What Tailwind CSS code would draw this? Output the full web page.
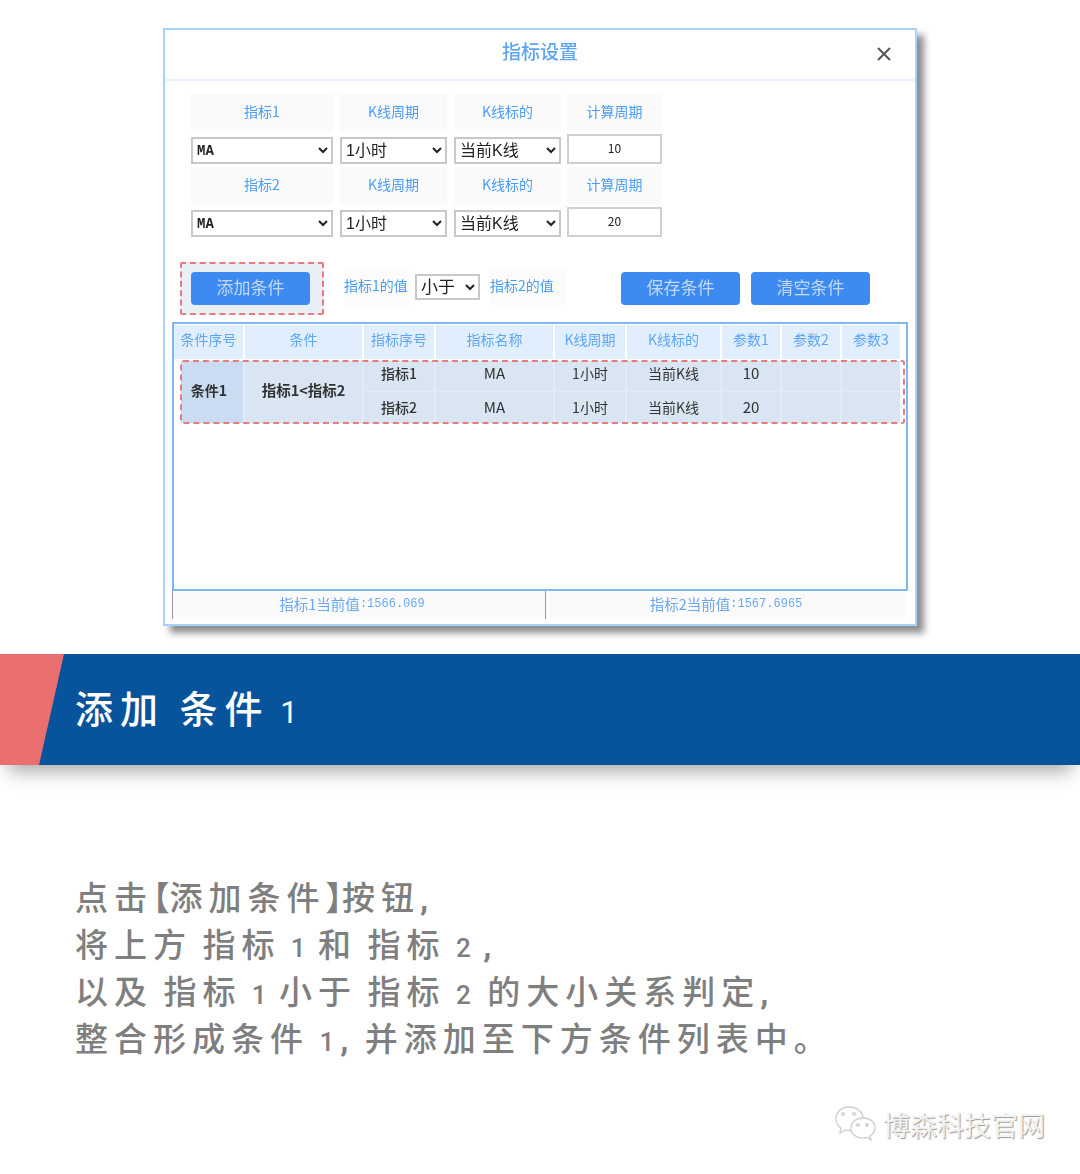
<!DOCTYPE html>
<html lang="zh-CN">
<head>
  <meta charset="UTF-8" />
  <meta name="viewport" content="width=device-width, initial-scale=1.0" />
  <title>添加条件 1</title>
  <script src="https://cdn.jsdelivr.net/npm/@tailwindcss/browser@4"></script>
</head>
<body class="bg-white h-[1174px] overflow-hidden font-['Noto_Sans_CJK_SC',sans-serif]">

  <!-- dialog -->
  <div class="ml-[163px] mt-[28px] w-[754px] h-[598px] bg-white border-2 border-[#a8d2fa] shadow-[7px_7px_7px_rgba(0,0,0,0.45)] pt-px blur-[0.4px]">
    <div class="relative h-[50px] border-b-2 border-[#e8f1fc] flex items-center justify-center pb-[8px] text-[19px] font-medium text-[#5ea6f4]">
      指标设置
      <svg class="absolute left-[712px] top-[16px] w-[14px] h-[14px]" viewBox="0 0 14 14" fill="none" stroke="#555" stroke-width="2"><path d="M1 1L13 13M13 1L1 13" /></svg>
    </div>

    <div class="ml-[26px] mt-[13px] grid grid-cols-[142px_107px_107px_95px] gap-x-[7px] text-[14px] text-[#4a9df5]">
      <div class="h-[37px] bg-[#fafafa] flex items-center justify-center pb-[2px]">指标1</div>
      <div class="h-[37px] bg-[#fafafa] flex items-center justify-center pb-[2px]">K线周期</div>
      <div class="h-[37px] bg-[#fafafa] flex items-center justify-center pb-[2px]">K线标的</div>
      <div class="-ml-px w-[95px] h-[37px] bg-[#fafafa] flex items-center justify-center pb-[2px]">计算周期</div>

      <select class="mt-[6px] h-[27px] border-2 border-[#c8c8c8] bg-white text-[#222] text-[14px] font-bold font-['Liberation_Mono',monospace]"><option>MA</option></select>
      <select class="mt-[6px] h-[27px] border-2 border-[#c8c8c8] bg-white text-[#222] text-[16px] font-['Liberation_Sans','Noto_Sans_CJK_SC',sans-serif]"><option>1小时</option></select>
      <select class="mt-[6px] h-[27px] border-2 border-[#c8c8c8] bg-white text-[#222] text-[16px] font-['Liberation_Sans','Noto_Sans_CJK_SC',sans-serif]"><option>当前K线</option></select>
      <div class="-ml-px w-[95px] mt-[3px] h-[30px] border-2 border-[#d0d0d0] bg-white text-[#222] text-[12px] flex items-center justify-center pb-[2px]">10</div>

      <div class="mt-[3px] h-[37px] bg-[#fafafa] flex items-center justify-center pb-[2px]">指标2</div>
      <div class="mt-[3px] h-[37px] bg-[#fafafa] flex items-center justify-center pb-[2px]">K线周期</div>
      <div class="mt-[3px] h-[37px] bg-[#fafafa] flex items-center justify-center pb-[2px]">K线标的</div>
      <div class="-ml-px w-[95px] mt-[3px] h-[37px] bg-[#fafafa] flex items-center justify-center pb-[2px]">计算周期</div>

      <select class="mt-[6px] h-[27px] border-2 border-[#c8c8c8] bg-white text-[#222] text-[14px] font-bold font-['Liberation_Mono',monospace]"><option>MA</option></select>
      <select class="mt-[6px] h-[27px] border-2 border-[#c8c8c8] bg-white text-[#222] text-[16px] font-['Liberation_Sans','Noto_Sans_CJK_SC',sans-serif]"><option>1小时</option></select>
      <select class="mt-[6px] h-[27px] border-2 border-[#c8c8c8] bg-white text-[#222] text-[16px] font-['Liberation_Sans','Noto_Sans_CJK_SC',sans-serif]"><option>当前K线</option></select>
      <div class="-ml-px w-[95px] mt-[3px] h-[30px] border-2 border-[#d0d0d0] bg-white text-[#222] text-[12px] flex items-center justify-center pb-[2px]">20</div>
    </div>

    <!-- add condition row -->
    <div class="ml-[15px] mt-[25px] h-[53px] flex items-start text-[14px] text-[#4a9df5]">
      <div class="w-[144px] h-[53px] bg-[#e8eff7] border-2 border-dashed border-[#ea7a7d] rounded-[2px] pl-[9px] pt-[8px] shrink-0">
        <button class="block w-[119px] h-[33px] rounded-[4px] bg-[#3d8bf0] text-[#c2d9f7] text-[17px] pb-[4px]">添加条件</button>
      </div>
      <div class="ml-[20px] mt-[6px] w-[65px] h-[37px] bg-[#fbfbfb] flex items-center pb-[2px] whitespace-nowrap shrink-0">指标1的值</div>
      <select class="ml-[6px] mt-[12px] w-[65px] h-[26px] border-2 border-[#c8c8c8] bg-white text-[#222] text-[17px] font-['Liberation_Sans','Noto_Sans_CJK_SC',sans-serif] shrink-0"><option>小于</option></select>
      <div class="ml-[10px] mt-[6px] w-[76px] h-[37px] bg-[#fbfbfb] flex items-center pb-[2px] whitespace-nowrap shrink-0">指标2的值</div>
      <button class="ml-[55px] mt-[10px] w-[119px] h-[33px] rounded-[4px] bg-[#3d8bf0] text-[#c2d9f7] text-[17px] pb-[4px] shrink-0">保存条件</button>
      <button class="ml-[11px] mt-[10px] w-[119px] h-[33px] rounded-[4px] bg-[#3d8bf0] text-[#c2d9f7] text-[17px] pb-[4px] shrink-0">清空条件</button>
    </div>

    <!-- condition table -->
    <div class="relative ml-[7px] mt-[7px] w-[736px] h-[269px] border-2 border-[#7fb7ee] pt-px">
      <div class="grid grid-cols-[69px_117px_70px_117px_70px_93px_58px_58px_58px] h-[34px] gap-x-[2px] text-[14px] text-[#5ea6f4]">
        <div class="bg-[#e1eefe] flex items-center justify-center pb-[6px]">条件序号</div>
        <div class="bg-[#e1eefe] flex items-center justify-center pb-[6px]">条件</div>
        <div class="bg-[#e1eefe] flex items-center justify-center pb-[6px]">指标序号</div>
        <div class="bg-[#e1eefe] flex items-center justify-center pb-[6px]">指标名称</div>
        <div class="bg-[#e1eefe] flex items-center justify-center pb-[6px]">K线周期</div>
        <div class="bg-[#e1eefe] flex items-center justify-center pb-[6px]">K线标的</div>
        <div class="bg-[#e1eefe] flex items-center justify-center pb-[6px]">参数1</div>
        <div class="bg-[#e1eefe] flex items-center justify-center pb-[6px]">参数2</div>
        <div class="bg-[#e1eefe] flex items-center justify-center pb-[6px]">参数3</div>
      </div>
      <div class="ml-[7px] mt-[2px] w-[719px] grid grid-cols-[62px_117px_70px_117px_70px_93px_58px_58px_58px] grid-rows-[30px_31px] gap-x-[2px] gap-y-px bg-[#e3ecf6] text-[14px] text-[#333]">
        <div class="row-span-2 bg-[#c9dcf2] font-bold flex items-center justify-center pr-[6px] pb-[4px]">条件1</div>
        <div class="row-span-2 bg-[#d9e5f2] font-bold text-[14.500px] flex items-center justify-center pb-[4px]">指标1&lt;指标2</div>
        <div class="bg-[#d9e5f2] font-medium flex items-center justify-center pb-[6px]">指标1</div>
        <div class="bg-[#d9e5f2] text-[15px] flex items-center justify-center pb-[6px]">MA</div>
        <div class="bg-[#d9e5f2] flex items-center justify-center pb-[6px]">1小时</div>
        <div class="bg-[#d9e5f2] flex items-center justify-center pb-[6px]">当前K线</div>
        <div class="bg-[#d9e5f2] text-[15px] flex items-center justify-center pb-[6px]">10</div>
        <div class="bg-[#d9e5f2]"></div>
        <div class="bg-[#d9e5f2]"></div>

        <div class="bg-[#d9e5f2] font-medium flex items-center justify-center">指标2</div>
        <div class="bg-[#d9e5f2] text-[15px] flex items-center justify-center">MA</div>
        <div class="bg-[#d9e5f2] flex items-center justify-center">1小时</div>
        <div class="bg-[#d9e5f2] flex items-center justify-center">当前K线</div>
        <div class="bg-[#d9e5f2] text-[15px] flex items-center justify-center">20</div>
        <div class="bg-[#d9e5f2]"></div>
        <div class="bg-[#d9e5f2]"></div>
      </div>
      <div class="absolute left-[6px] top-[36px] w-[725px] h-[64px] border-2 border-dashed border-[#ea7a7d] rounded-[3px]"></div>
    </div>

    <!-- status bar -->
    <div class="ml-[7px] w-[734px] h-[28px] flex text-[14.500px] text-[#6aa8f5]">
      <div class="w-[373px] bg-[#fafafa] border-l border-[#999] flex items-center justify-center pr-[14px] pb-[2px]">指标1当前值<span class="text-[12px] font-['Liberation_Mono',monospace]">:1566.069</span></div>
      <div class="w-[361px] bg-[#fafafa] border-l border-[#999] flex items-center justify-center pb-[2px]">指标2当前值<span class="text-[12px] font-['Liberation_Mono',monospace]">:1567.6965</span></div>
    </div>
  </div>

  <!-- banner -->
  <div class="relative mt-[28px] h-[111px] bg-[#07539c] shadow-[0_14px_18px_-8px_rgba(0,0,0,0.35)] flex items-center pl-[75px] pb-[6px] text-white text-[38px] font-medium tracking-[7px] [word-spacing:-1px]">
    <div class="absolute left-0 top-0 w-[64px] h-full bg-[#ea7070] [clip-path:polygon(0_0,100%_0,61%_100%,0_100%)]"></div>
    <span class="relative whitespace-nowrap">添加 条件<span class="[word-spacing:-5px]"> <span class="leading-none text-[31px] font-normal font-['Roboto',sans-serif]">1</span></span></span>
  </div>

  <!-- description -->
  <div class="mt-[108px] pl-[75px] text-[33px] leading-[47px] tracking-[6px] text-[#7f7f7f] font-medium whitespace-nowrap [word-spacing:-3px]">
    <p>点击<span class="font-bold tracking-normal [font-feature-settings:'halt']">【</span>添加条件<span class="font-bold tracking-normal [font-feature-settings:'halt']">】</span>按钮<span class="leading-none font-bold font-['Roboto',sans-serif]">,</span></p>
    <p>将上方 指标 <span class="leading-none tracking-[2px] text-[26px] font-['Roboto',sans-serif]">1</span> 和 指标 <span class="leading-none tracking-[2px] text-[26px] font-['Roboto',sans-serif]">2</span> <span class="leading-none font-bold font-['Roboto',sans-serif]">,</span></p>
    <p>以及 指标 <span class="leading-none tracking-[2px] text-[26px] font-['Roboto',sans-serif]">1</span> 小于 指标 <span class="leading-none text-[26px] font-['Roboto',sans-serif]">2</span> 的大小关系判定<span class="leading-none font-bold font-['Roboto',sans-serif]">,</span></p>
    <p>整合形成条件 <span class="leading-none text-[26px] font-['Roboto',sans-serif]">1</span><span class="leading-none font-bold font-['Roboto',sans-serif]">,</span> 并添加至下方条件列表中。</p>
  </div>

  <!-- watermark -->
  <div class="mt-[44px] pr-[35px] flex justify-end items-center gap-[5px]">
    <svg class="w-[44px] h-[38px]" viewBox="0 0 44 38" fill="none" stroke="#cfcfcf" stroke-width="1.4">
      <path d="M15 2C7 2 2 7 2 14c0 4 2 7 5 9l-1 5 5-3c2 .6 3 .7 5 .7 8 0 13-5 13-12S23 2 15 2z" />
      <path fill="#fff" d="M29 13c-7 0-12 4-12 10s5 10 12 10c1.500 0 3-.2 4-.6l4 2.600-1-4c3-2 5-5 5-8 0-6-5-10-12-10z" />
      <circle cx="9" cy="9" r="1.400" /><circle cx="20" cy="9" r="1.400" /><circle cx="24" cy="20" r="1.200" /><circle cx="33" cy="20" r="1.200" />
    </svg>
    <span class="text-[27px] leading-none text-[#f2f2f2] [text-shadow:1px_1px_1px_#9a9a9a]">博森科技官网</span>
  </div>
</body>
</html>
